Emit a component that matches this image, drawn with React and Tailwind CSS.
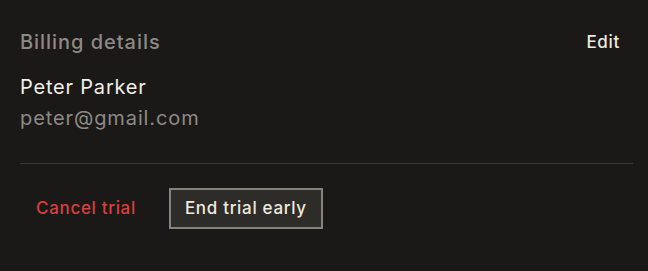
import React from 'react';

const App = () => {
    return (
        <div className="w-[648px] h-[271px] bg-[#1b1918] px-5 pt-[29px] font-['Inter',sans-serif]">
            <div className="flex justify-between items-center">
                <h2 className="text-[20px] leading-[26px] tracking-[0.048em] font-medium text-[#8d8a86]">Billing details</h2>
                <button className="text-[17px] leading-[26px] tracking-[0.04em] font-medium text-[#eeeadf] mr-2">Edit</button>
            </div>
            <div className="mt-[17px]">
                <p className="text-[20px] leading-[31px] tracking-[0.04em] text-[#f1efe9]">Peter Parker</p>
                <p className="text-[20px] leading-[31px] tracking-[0.045em] text-[#8d8a86]">peter@gmail.com</p>
            </div>
            <div className="mt-[29px] mr-[-5px] border-t border-[#3b3936]" />
            <div className="flex items-center mt-[24px] pl-4 gap-[33px]">
                <button className="text-[17px] tracking-[0.04em] font-medium text-[#d9403b]">Cancel trial</button>
                <button className="h-[41px] px-[14px] border-2 border-[#85837e] bg-[#2e2c29] text-[17px] tracking-[0.04em] font-medium text-[#eeeadf]">
                    End trial early
                </button>
            </div>
        </div>
    );
};

export default App;
